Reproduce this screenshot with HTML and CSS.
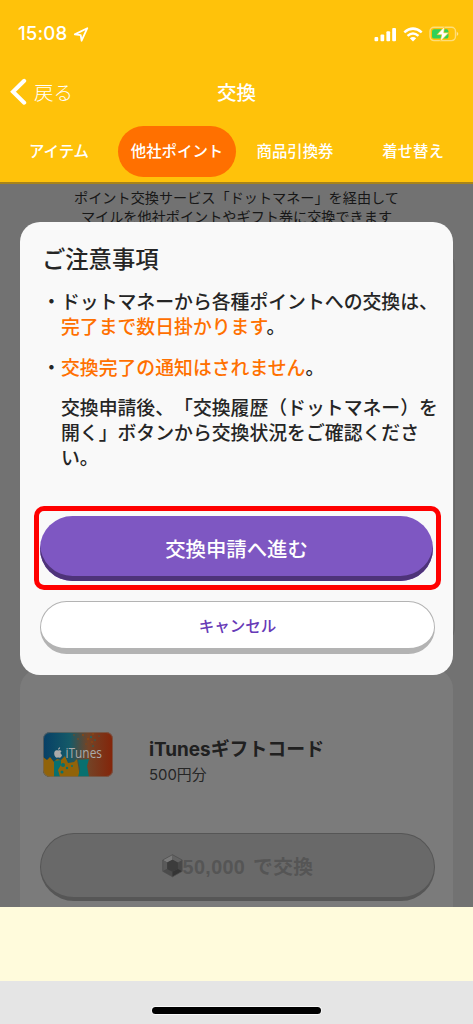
FILE: index.html
```html
<!DOCTYPE html>
<html lang="ja">
<head>
<meta charset="utf-8">
<meta name="viewport" content="width=device-width, initial-scale=1">
<title>交換</title>
<link rel="stylesheet" href="styles.css">
</head>
<body>
<div class="app">
  <header class="header">
    <div class="status">
      <div class="clock">15:08
        <svg width="17" height="17" viewBox="0 0 17 17"><path d="M1.8 8.4 14.3 2.2 8.6 14.7 7.7 9.1Z" fill="none" stroke="#fff" stroke-width="1.8" stroke-linejoin="round"/></svg>
      </div>
      <div class="indicators">
        <svg width="23" height="15" viewBox="0 0 23 15" fill="#fff"><rect x="0.5" y="10" width="3.7" height="4.3" rx="1"/><rect x="6.5" y="7.5" width="3.7" height="6.8" rx="1"/><rect x="12.4" y="4.3" width="3.7" height="10" rx="1"/><rect x="18.2" y="1" width="3.8" height="13.3" rx="1"/></svg>
        <svg width="20" height="15" viewBox="0 0 20 15" fill="none" stroke="#fff" stroke-width="2.5"><path d="M1.3 5.4Q10-2.2 18.7 5.4"/><path d="M4.5 8.9Q10 4.2 15.5 8.9"/><path d="M10 14.5 6.8 11.3Q10 8.7 13.2 11.3Z" fill="#fff" stroke="none"/></svg>
        <svg width="30" height="16" viewBox="0 0 30 16"><rect x="1" y="1.2" width="25.5" height="13.4" rx="4" fill="none" stroke="#fff" stroke-opacity=".45" stroke-width="1.4"/><rect x="3" y="3.2" width="16.5" height="9.4" rx="2.2" fill="#2fd158"/><path d="M27.8 5.7Q30.8 7.9 27.8 10.1Z" fill="#fff" opacity=".55"/><path d="M15.5.6 8 8.7H12.7L11.2 15.4 19.7 6.8H14.8Z" fill="#fff" stroke="#ffc20a" stroke-width=".6"/></svg>
      </div>
    </div>
    <nav class="navbar">
      <a class="back"><svg width="18" height="28" viewBox="0 0 18 28"><path d="M14.2 2.8 3 13.8 14.2 24.7" fill="none" stroke="#fff" stroke-width="4" stroke-linecap="round" stroke-linejoin="miter"/></svg>戻る</a>
      <h1 class="page-title">交換</h1>
    </nav>
    <div class="tabs">
      <span class="tab">アイテム</span>
      <span class="tab tab-active">他社ポイント</span>
      <span class="tab">商品引換券</span>
      <span class="tab">着せ替え</span>
    </div>
  </header>

  <main class="content">
    <p class="intro">ポイント交換サービス「ドットマネー」を経由して<br>マイルを他社ポイントやギフト券に交換できます</p>
    <section class="card previous-card"></section>
    <section class="card gift-card">
      <div class="product">
        <svg class="gift-image" width="70" height="45" viewBox="0 0 70 45">
          <defs>
            <clipPath id="card-shape"><rect width="70" height="45" rx="7"/></clipPath>
            <linearGradient id="card-color"><stop offset="0" stop-color="#073f66"/><stop offset=".38" stop-color="#145a68"/><stop offset=".65" stop-color="#744326"/><stop offset="1" stop-color="#842409"/></linearGradient>
          </defs>
          <g clip-path="url(#card-shape)">
            <path fill="url(#card-color)" d="M0 0H70V45H0Z"/>
            <path fill="#916309" d="M0 25 4 28 7 25 11 30 14 27 18 28 22 24 25 31 31 30 34 27 37 45H0Z"/>
            <path fill="#08706f" d="M11 29 18 28 18 33 15 38 17 45H11ZM35 28 46 27 44 34 46 45H35L37 37Z"/>
            <g fill="#08706f"><circle cx="20" cy="33" r="2"/><circle cx="24" cy="36" r="1.2"/><circle cx="29" cy="34" r="1"/><circle cx="19" cy="40" r="1.5"/></g>
            <g fill="#8b4613"><circle cx="31" cy="3" r=".7"/><circle cx="35" cy="7" r=".8"/><circle cx="40" cy="3" r="1"/><circle cx="45" cy="7" r="1.2"/><circle cx="50" cy="2" r="1"/><circle cx="49" cy="10" r="1"/><circle cx="43" cy="12" r=".7"/></g>
            <g fill="#1b6a67"><circle cx="48" cy="5" r="1"/><circle cx="52" cy="8" r=".8"/><circle cx="56" cy="4" r=".6"/><circle cx="50" cy="14" r=".8"/></g>
            <path fill="#aaa" d="M15.2 18.6C13.8 18.1 12.8 17.8 11.8 19.3 10.2 21.7 12.1 26 13.9 25.8 15 25.5 15.3 25.5 16.4 25.8 17.8 26 19 23.6 19 22.9 17.1 22 17.2 19.9 18.6 19.2 17.5 17.9 16.5 18.2 15.2 18.6ZM15.1 17.8C15 16.5 16 15.5 17.1 15.3 17.3 16.5 16.2 17.7 15.1 17.8Z"/>
            <text class="gift-logo" x="22.5" y="26" textLength="36.5" lengthAdjust="spacingAndGlyphs">iTunes</text>
          </g>
          <rect x=".5" y=".5" width="69" height="44" rx="6.5" fill="none" stroke="#77695e" stroke-opacity=".65"/>
        </svg>
        <div class="product-copy"><h2 class="product-name">iTunesギフトコード</h2><p class="product-value">500円分</p></div>
      </div>
      <button class="exchange" disabled>
        <svg width="21" height="24" viewBox="0 0 21 24"><path fill="#484848" d="M10.5.7 20.2 6V17.3L10.5 22.8.8 17.3V6Z"/><path fill="#7a7a7a" d="M10.5.7.8 6 5.2 8.6 10.5 5.8Z"/><path fill="#626262" d="M10.5.7 20.2 6 15.8 8.6 10.5 5.8Z"/><path fill="#5a5a5a" d="M.8 6V17.3L5.2 15V8.6Z"/><path fill="#4b4b4b" d="M.8 17.3 10.5 22.8V17.8L5.2 15Z"/><path fill="#343434" d="M20.2 17.3 10.5 22.8V17.8L15.8 15Z"/><path fill="#3c3c3c" d="M10.5 5.8 15.8 8.6V15L10.5 17.8 5.2 15V8.6Z"/><path fill="none" stroke="#505050" stroke-width=".7" d="M10.5.7 20.2 6V17.3L10.5 22.8.8 17.3V6Z"/></svg>
        <span class="exchange-label">50,000 で交換</span>
      </button>
    </section>

    <section class="dialog" role="dialog">
      <h2 class="dialog-title">ご注意事項</h2>
      <ul class="notes">
        <li class="note"><span>・</span><p>ドットマネーから各種ポイントへの交換は、<br><em>完了まで数日掛かります</em>。</p></li>
        <li class="note"><span>・</span><p><em>交換完了の通知はされません</em>。</p></li>
        <li class="note"><span></span><p>交換申請後、「交換履歴（ドットマネー）を<br>開く」ボタンから交換状況をご確認くださ<br>い。</p></li>
      </ul>
      <div class="highlight"><button class="proceed">交換申請へ進む</button></div>
      <button class="cancel">キャンセル</button>
    </section>
  </main>
  <div class="banner"></div>
  <footer class="home-area"><div class="home-indicator"></div></footer>
</div>
</body>
</html>
```
FILE: styles.css
```css
* { box-sizing: border-box; }
body, h1, h2, p, ul { margin: 0; padding: 0; }
body { font-family: "Noto Sans CJK JP", sans-serif; color: #252525; text-spacing-trim: space-all; }
svg { display: block; flex: none; }
button { font-family: inherit; padding: 0; border: 0; }
.app { width: 473px; height: 1024px; display: flex; flex-direction: column; overflow: hidden; }

.header { height: 182px; flex: none; background: #ffc20a; color: #fff; }
.status { height: 60px; padding: 8px 14px 0 18px; display: flex; justify-content: space-between; align-items: center; }
.clock { display: flex; align-items: center; gap: 6px; font: 500 18.7px/24px Inter, sans-serif; letter-spacing: 0.1px; }
.indicators { display: flex; align-items: center; gap: 6px; }
.navbar { height: 66px; display: grid; grid-template-columns: 1fr auto 1fr; align-items: center; padding: 0 10px 2px; }
.back { display: flex; align-items: center; gap: 6px; font-size: 19.5px; font-weight: 300; line-height: 28px; }
.page-title { font-size: 19.5px; font-weight: 500; line-height: 28px; }
.tabs { height: 51px; display: flex; align-items: center; }
.tab { width: 118px; height: 51px; font-size: 15.4px; font-weight: 500; line-height: 49px; text-align: center; white-space: nowrap; }
.tab-active { border-radius: 26px; background: #ff7000; }

.content { position: relative; height: 725px; flex: none; overflow: hidden; background: #727272; border-top: 2px solid #a8841a; }
.intro { padding-top: 4px; text-align: center; font-size: 14.15px; line-height: 19px; color: #171717; }
.card { margin: 0 20px; background: #7b7b7b; border-radius: 20px; }
.previous-card { height: 400px; margin-top: 21px; margin-right: 18px; border: 1px solid #666; background: #727272; }
.gift-card { height: 290px; margin-top: 22px; padding: 63px 18px 0 20px; }
.product { display: flex; gap: 36px; padding-left: 3px; }
.product-copy { padding-top: 4px; }
.product-name { font: 700 18.9px/27px Inter, "Noto Sans CJK JP", sans-serif; color: #202020; }
.product-value { font: 400 14.9px/24px Inter, "Noto Sans CJK JP", sans-serif; color: #262626; }
.gift-logo { font: 400 13.6px "Open Sans", sans-serif; fill: #aaa; }
.exchange { width: 395px; height: 68px; margin-top: 46px; display: flex; align-items: center; justify-content: center; border: 1px solid #565656; border-bottom-width: 4px; border-radius: 34px; background: #696969; color: #555; font: 700 19.8px/30px "Liberation Sans", "Noto Sans CJK JP", sans-serif; }
.exchange-label { padding-top: 3px; word-spacing: 2px; letter-spacing: .35px; }

.dialog { position: absolute; top: 38px; left: 20px; width: 433px; height: 453px; padding: 19px 12px 0 14px; border-radius: 20px; background: #f9f9f9; }
.dialog-title { padding-left: 8px; font-size: 23.3px; font-weight: 500; line-height: 34px; }
.notes { list-style: none; margin-top: 13px; display: flex; flex-direction: column; gap: 15px; font-size: 18.85px; font-weight: 500; line-height: 25.3px; }
.note { display: grid; grid-template-columns: 19px 1fr; padding-left: 8px; white-space: nowrap; }
.note em { font-style: normal; color: #ff7000; }
.highlight { width: 407px; height: 84px; margin-top: 36px; padding: 5px 2px; border: 5px solid #f00; border-radius: 10px; }
.proceed { display: block; width: 393px; height: 65px; margin-left: -1px; border-radius: 33px; background: #7e57c2; box-shadow: inset 0 -5px #4e3379; color: #fff; font-size: 20.4px; font-weight: 500; line-height: 63px; }
.cancel { display: block; width: 395px; height: 53px; margin: 11px 0 0 6px; border: 1px solid #b3b3b3; border-bottom-width: 6px; border-radius: 27px; background: #fff; color: #673ab7; font-size: 15.5px; font-weight: 500; line-height: 46px; }

.banner { height: 74px; flex: none; background: #fffbdc; }
.home-area { height: 43px; flex: none; background: #e5e5e5; padding-top: 26px; }
.home-indicator { width: 169px; height: 7px; margin: 0 auto; border-radius: 4px; background: #000; box-shadow: 0 0 0 1px #f8f8f8; }
```
